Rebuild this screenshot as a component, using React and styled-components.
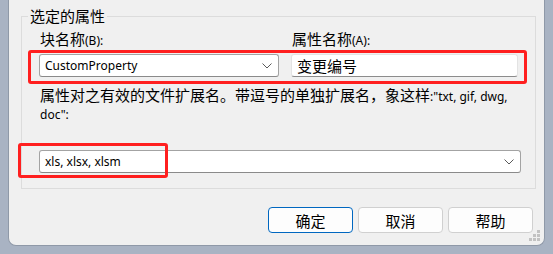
import React from 'react';
import styled, { createGlobalStyle } from 'styled-components';

const GlobalStyle = createGlobalStyle`
  html, body {
    margin: 0;
    padding: 0;
    background: #a9b3c3;
  }
  body {
    font-family: "Noto Sans CJK SC", "Noto Sans", sans-serif;
    font-size: 15px;
    color: #000;
  }
  * {
    box-sizing: border-box;
  }
`;

const Chevron = () => (
  <svg width="10" height="6" viewBox="0 0 10 6">
    <polyline points="0.5,0.5 5,5 9.5,0.5" fill="none" stroke="#5a5a5a" strokeWidth="1" />
  </svg>
);

const Grip = () => (
  <svg width="12" height="12" viewBox="0 0 12 12">
    {[
      [8, 0],
      [4, 4], [8, 4],
      [0, 8], [4, 8], [8, 8],
    ].map(([x, y]) => (
      <rect key={`${x}-${y}`} x={x} y={y} width="3" height="3" fill="#c2c2c2" />
    ))}
  </svg>
);

const App = () => {
  return (
    <>
      <GlobalStyle />
      <Window>
        <Group>
          <Legend>选定的属性</Legend>
          <GroupBody>
            <LabelRow>
              <Label>块名称<Lat>(B):</Lat></Label>
              <Label>属性名称<Lat>(A):</Lat></Label>
            </LabelRow>
            <FieldRow>
              <Combo>
                <Lat>CustomProperty</Lat>
                <Chevron />
              </Combo>
              <TextBox>变更编号</TextBox>
              <Mark $left={-11} $top={-4} $width={499} $height={34} />
            </FieldRow>
            <Description>
              属性对之有效的文件扩展名。带逗号的单独扩展名，象这样<Lat>:"txt, gif, dwg, doc":</Lat>
            </Description>
            <WideCombo>
              <Lat>xls, xlsx, xlsm</Lat>
              <Chevron />
              <Mark $left={-22} $top={-8} $width={150} $height={35} />
            </WideCombo>
          </GroupBody>
        </Group>
        <Buttons>
          <Button $primary>确定</Button>
          <Button>取消</Button>
          <Button>帮助</Button>
        </Buttons>
        <GripCorner>
          <Grip />
        </GripCorner>
      </Window>
    </>
  );
};

const Window = styled.div`
  position: relative;
  width: 537px;
  height: 246px;
  margin-left: 8px;
  padding: 5px 11px 0 12px;
  background: #f0f0f0;
  border: 1px solid #8f99a8;
  border-top: none;
  border-radius: 0 0 8px 8px;
`;

const Group = styled.fieldset`
  margin: 0;
  padding: 0;
  height: 184px;
  border: 1px solid #dcdcdc;
  border-radius: 0;
`;

const Legend = styled.legend`
  margin-left: 6px;
  padding: 0 2px;
  line-height: 22px;
  font-size: 15px;
  color: #000;
`;

const GroupBody = styled.div`
  padding: 1px 14px 0 17px;
`;

const Lat = styled.span`
  font-family: "Noto Sans", sans-serif;
  font-size: 12px;
`;

const LabelRow = styled.div`
  display: grid;
  grid-template-columns: 240px 227px;
  column-gap: 12px;
`;

const Label = styled.div`
  line-height: 22px;
  padding-left: 1px;
`;

const FieldRow = styled.div`
  position: relative;
  display: grid;
  grid-template-columns: 240px 227px;
  column-gap: 12px;
  margin-top: 2px;
`;

const Combo = styled.div`
  height: 23px;
  display: flex;
  align-items: center;
  justify-content: space-between;
  padding: 0 6px 0 5px;
  background: #fff;
  border: 1px solid #a3a3a3;
  border-bottom-color: #8a8a8a;
  border-radius: 3px;
`;

const TextBox = styled.div`
  height: 23px;
  display: flex;
  align-items: center;
  padding: 0 5px;
  background: #fff;
  border: 1px solid #e3e3e3;
  border-bottom-color: #8c8c8c;
  border-radius: 3px;
`;

const WideCombo = styled(Combo)`
  position: relative;
  width: 482px;
  margin-top: 27px;
`;

const Mark = styled.div`
  position: absolute;
  left: ${({ $left }) => $left}px;
  top: ${({ $top }) => $top}px;
  width: ${({ $width }) => $width}px;
  height: ${({ $height }) => $height}px;
  border: 3px solid #ff1f1f;
  border-radius: 3px;
  pointer-events: none;
`;

const Description = styled.p`
  margin: 10px 0 0;
  width: 480px;
  padding-left: 1px;
  line-height: 16px;
`;

const Buttons = styled.div`
  display: flex;
  justify-content: flex-end;
  gap: 5px;
  margin-top: 18px;
`;

const Button = styled.button`
  width: 85px;
  height: 26px;
  padding: 0;
  font-family: "Noto Sans CJK SC", sans-serif;
  font-size: 15px;
  color: #000;
  background: #fdfdfd;
  border: 1px solid ${({ $primary }) => ($primary ? '#0067c0' : '#d0d0d0')};
  border-radius: 4px;
`;

const GripCorner = styled.div`
  position: absolute;
  right: 3px;
  bottom: 3px;
  line-height: 0;
`;

export default App;
